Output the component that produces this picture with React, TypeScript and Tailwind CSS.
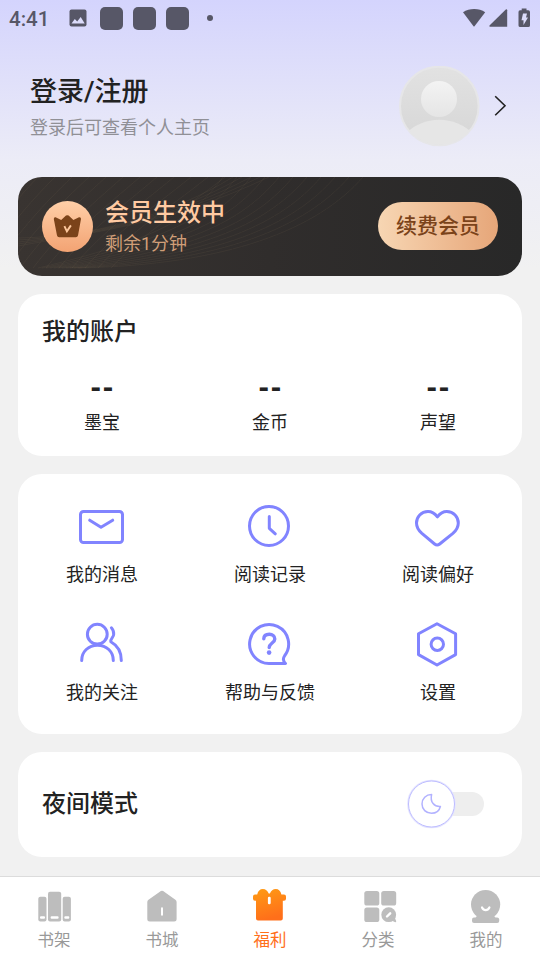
import React, { Fragment, ReactNode, useState } from "react";

interface MenuItem {
  label: string;
  icon: ReactNode;
}

const ACCOUNT_ITEMS = ["墨宝", "金币", "声望"];

const MENU_ITEMS: MenuItem[] = [
  {
    label: "我的消息",
    icon: (
      <Fragment>
        <rect x="2.5" y="9.5" width="42" height="31" rx="3" />
        <path d="M11.7 18.2 23 25.3 34.7 18.2" />
      </Fragment>
    ),
  },
  {
    label: "阅读记录",
    icon: (
      <Fragment>
        <circle cx="23" cy="24" r="19.5" />
        <path d="M23.3 14.5V26.3L29.3 31.8" />
      </Fragment>
    ),
  },
  {
    label: "阅读偏好",
    icon: (
      <path d="M23.4 14.8C20.5 11 17.5 9.5 14 9.5 7.2 9.5 2.5 14.8 2.5 21c0 4.5 2.2 7.6 5.4 10.4L20.6 42c1.7 1.4 3.4 1.4 5.1 0l13.2-10.6c3.2-2.8 5.4-5.9 5.4-10.4 0-6.2-4.7-11.5-11.5-11.5-3.5 0-6.5 1.5-9.4 5.3Z" />
    ),
  },
  {
    label: "我的关注",
    icon: (
      <Fragment>
        <circle cx="19.3" cy="14.2" r="9.9" />
        <path d="M3.7 40.4C3.7 31.5 10.5 25.2 19.5 25.2S35.3 31.5 35.3 40.4" />
        <path d="M33.4 7.8c1.7 1.8 2.4 4.2 2.3 6.5 0 3.2-3.6 4.2-2.9 7.5C39.5 25.5 43.3 32 43.3 40.4" />
      </Fragment>
    ),
  },
  {
    label: "帮助与反馈",
    icon: (
      <Fragment>
        <path d="M39.5 43.5H23A19.5 19.5 0 1 1 38.5 36c-1.5 2.2-2 4.5 1 7.5Z" />
        <path d="M17.8 18.8c.1-3.1 2.4-4.5 5.5-4.5s5.5 1.7 5.5 4.6c0 4-5.6 4.2-5.6 8.6" strokeWidth="3.4" />
        <circle cx="23.1" cy="32.6" r="2.3" fill="#8184ff" stroke="none" />
      </Fragment>
    ),
  },
  {
    label: "设置",
    icon: (
      <Fragment>
        <path d="M23 3.7 41.6 13.8V34.6L23 45 4.5 34.6V13.8Z" />
        <circle cx="23.3" cy="24.3" r="6.2" />
      </Fragment>
    ),
  },
];

const TABS: MenuItem[] = [
  {
    label: "书架",
    icon: (
      <Fragment>
        <rect x="2.3" y="8.7" width="8.2" height="24.8" rx="2" />
        <rect x="12" y="3.7" width="13.2" height="29.8" rx="2" />
        <rect x="26.7" y="8.7" width="8.2" height="24.8" rx="2" />
        <rect x="4" y="28.2" width="5" height="2.6" rx="1" fill="#fff" />
        <rect x="14.6" y="28.2" width="8" height="2.6" rx="1" fill="#fff" />
        <rect x="28.3" y="28.2" width="5" height="2.6" rx="1" fill="#fff" />
      </Fragment>
    ),
  },
  {
    label: "书城",
    icon: (
      <Fragment>
        <path d="M16.9 3.1q1.1-.9 2.2 0L31.4 11.8q1.2.9 1.2 2.2V31q0 2.5-2.5 2.5H5.8Q3.3 33.5 3.3 31V14q0-1.3 1.2-2.2Z" />
        <rect x="17" y="19.3" width="2" height="8.5" rx="1" fill="#fff" />
      </Fragment>
    ),
  },
  {
    label: "福利",
    icon: (
      <Fragment>
        <defs>
          <linearGradient id="gift" x1="0" y1="0" x2="0.3" y2="1">
            <stop offset="0" stopColor="#ff9c14" />
            <stop offset="1" stopColor="#ff6f1a" />
          </linearGradient>
        </defs>
        <path
          fill="url(#gift)"
          d="M3 6.6h2.2C6 3 8 1.1 10.8 1.1c3 0 4.5 1.7 5.9 4.5h1.2c1.4-2.8 2.9-4.5 5.9-4.5 2.8 0 4.8 1.9 5.6 5.5H32q2 0 2 2v2.1q0 2-2 2h-1.2V30.6q0 2-2 2H6q-2 0-2-2V12.7H3q-2 0-2-2V8.6q0-2 2-2Z"
        />
        <rect x="15.9" y="8.8" width="2.8" height="7.4" rx="1.2" fill="#fff" />
      </Fragment>
    ),
  },
  {
    label: "分类",
    icon: (
      <Fragment>
        <rect x="4.3" y="3" width="15" height="14.6" rx="2.6" />
        <rect x="21.2" y="3" width="15" height="14.6" rx="2.6" />
        <rect x="4.3" y="19.4" width="15" height="14.6" rx="2.6" />
        <circle cx="28.7" cy="26.7" r="7.4" />
        <path d="m31 32.3 3.4-3.3 1.8 4q.3 1.2-1 1.2Z" />
        <path d="m27 28.5 3.2-3.2" stroke="#fff" strokeWidth="2.4" strokeLinecap="round" />
      </Fragment>
    ),
  },
  {
    label: "我的",
    icon: (
      <Fragment>
        <circle cx="17.6" cy="16.6" r="14.6" />
        <rect x="4" y="29.4" width="27.2" height="5.6" rx="2" />
        <path d="M10 26h15l2.5 4h-20Z" />
        <path
          d="M14 19.5c1.8 3.6 5.6 3.6 7.4 0"
          fill="none"
          stroke="#fff"
          strokeWidth="2.2"
          strokeLinecap="round"
        />
      </Fragment>
    ),
  },
];

function StatusBar() {
  return (
    <div className="flex h-9 items-center pl-[9px] pr-2.5 text-[#575767]">
      <span className="w-[60px] pt-0.5 font-[Roboto] text-[20.5px] font-medium leading-none">
        4:41
      </span>
      <svg width="18" height="18" viewBox="0 0 18 18">
        <rect x="0.5" y="0.5" width="17" height="17" rx="2" fill="currentColor" />
        <path d="M2.5 14.5 5.8 10l2.4 2.6L11.7 8l4 6.5Z" fill="#dcdcfb" />
      </svg>
      <div className="ml-[13px] flex gap-2.5">
        {[...Array(3)].map((_, index) => (
          <span key={index} className="size-[23px] rounded-[5px] bg-[#575767]" />
        ))}
      </div>
      <span className="ml-[18px] size-1.5 rounded-full bg-[#575767]" />
      <svg className="ml-auto mt-px" width="67" height="22" viewBox="0 0 67 22" fill="currentColor">
        <path d="M0 4.3C6.5-.1 16-.1 22.2 4.3L11.5 18.3Q11 18.8 10.5 18.3Z" />
        <path d="M44.2 2.2V18.8H27q-1.2-.2-.5-1.2L42.8 1.6q1.2-.7 1.4.6Z" />
        <path d="M57 2.2h1.7V.5h4.8v1.7h1.7q1.8 0 1.8 1.8v13.4q0 1.6-1.8 1.6H57.3q-1.8 0-1.8-1.6V4q0-1.8 1.5-1.8Z" />
        <path d="M60 5.5h4l-1 4h2L60.5 17v-4.8h-2Z" fill="#dcdcfb" />
      </svg>
    </div>
  );
}

function Profile() {
  return (
    <div className="flex h-[141px] items-start pl-[30px] pr-[33px] pt-[30px]">
      <div className="flex flex-col pt-2">
        <h1 className="text-[27px] font-medium leading-9 text-[#222]">登录/注册</h1>
        <p className="text-lg leading-9 text-[#909096]">登录后可查看个人主页</p>
      </div>
      <svg className="ml-auto" width="81" height="81" viewBox="0 0 81 81">
        <defs>
          <linearGradient id="head" x1="0" y1="0" x2="0" y2="1">
            <stop offset="0" stopColor="#f3f3f3" />
            <stop offset="1" stopColor="#e5e5e5" />
          </linearGradient>
          <linearGradient id="face" x1="0" y1="0" x2="0" y2="1">
            <stop offset="0" stopColor="#e2e2e2" />
            <stop offset="1" stopColor="#d6d6d6" />
          </linearGradient>
          <clipPath id="avatar">
            <circle cx="40.3" cy="40" r="39" />
          </clipPath>
        </defs>
        <circle cx="40.3" cy="40" r="39.3" fill="url(#face)" stroke="#e6e6e8" strokeWidth="2" />
        <circle cx="40" cy="33" r="18" fill="url(#head)" />
        <circle cx="40.3" cy="102" r="48.3" fill="#e6e6e6" clipPath="url(#avatar)" />
      </svg>
      <svg
        className="ml-3.5 mt-[29px]"
        width="13"
        height="21"
        viewBox="0 0 13 21"
        fill="none"
        stroke="#222"
        strokeWidth="1.6"
      >
        <path d="M1.2 1.2 11 10.7 1.2 20.2" />
      </svg>
    </div>
  );
}

function VipCard() {
  return (
    <section className="relative flex h-[99px] items-center overflow-hidden rounded-[24px] bg-linear-to-r from-[#393431] via-[#302d2c] to-[#282828] px-6">
      <svg
        className="absolute inset-0"
        width="504"
        height="99"
        viewBox="0 0 504 99"
        fill="none"
        stroke="#b59a70"
        strokeOpacity="0.1"
        strokeWidth="0.8"
      >
        {[...Array(11)].map((_, index) => (
          <path
            key={index}
            d={`M${345 - index * 14} 0C${300 - index * 12} ${52 - index * 2} ${210 - index * 5} ${88 - index * 3} ${60 - index * 4} 91`}
          />
        ))}
        {[...Array(12)].map((_, index) => (
          <path
            key={index}
            d={`M${20 + index * 17} 0C${index * 15 - 5} ${26 + index} ${index * 14 - 25} 52 ${index * 13 - 50} 91`}
          />
        ))}
        {[...Array(5)].map((_, index) => (
          <path
            key={index}
            d={`M0 ${61 + index * 2}C70 ${60 - index} 150 ${40 + index * 2} ${215 + index * 9} 0`}
          />
        ))}
      </svg>
      <svg className="relative" width="51" height="51" viewBox="0 0 51 51">
        <defs>
          <linearGradient id="badge" x1="0" y1="0" x2="0" y2="1">
            <stop offset="0" stopColor="#ffcfa8" />
            <stop offset="1" stopColor="#f3a373" />
          </linearGradient>
        </defs>
        <circle cx="25.5" cy="25.5" r="25.5" fill="url(#badge)" />
        <path
          d="M13.6 16.3 19.2 19 24 14.6q1.3-.9 2.6 0l4.8 4.4 5.6-2.7q2.2-.3 2 1.6L36 34.5q-.4 1.8-2.2 1.8H17.2q-1.8 0-2.2-1.8L11.8 17.9q-.1-1.9 1.8-1.6Z"
          fill="#7b431a"
        />
        <path d="m22.4 25.2 2.5 5.2 4-6" fill="none" stroke="#fdc79c" strokeWidth="1.9" />
      </svg>
      <div className="relative ml-3">
        <h2 className="text-2xl font-medium leading-[34px] text-[#ffcaa2]">会员生效中</h2>
        <p className="text-lg leading-7 text-[#d09e78]">剩余1分钟</p>
      </div>
      <button className="relative mb-px ml-auto h-12 w-[120px] rounded-full bg-linear-to-r from-[#f7d6b3] to-[#e6a679] pt-0.5 text-[21px] font-medium text-[#7b431a]">
        续费会员
      </button>
    </section>
  );
}

function AccountCard() {
  return (
    <section className="h-[162px] rounded-[24px] bg-white pt-[21px]">
      <h2 className="pl-6 text-2xl font-medium leading-[34px] text-[#222]">我的账户</h2>
      <div className="grid grid-cols-3 pt-[22px]">
        {ACCOUNT_ITEMS.map((label) => (
          <div key={label} className="flex flex-col items-center">
            <span className="font-[Roboto] text-[27px] font-black leading-9 text-[#222]">--</span>
            <span className="text-lg leading-[31px] text-[#222]">{label}</span>
          </div>
        ))}
      </div>
    </section>
  );
}

function MenuCard() {
  return (
    <section className="grid h-[260px] grid-cols-3 content-start rounded-[24px] bg-white pt-7">
      {MENU_ITEMS.map((item) => (
        <div key={item.label} className="flex h-[118px] flex-col items-center">
          <svg
            width="48"
            height="48"
            viewBox="0 0 48 48"
            fill="none"
            stroke="#8184ff"
            strokeWidth="3"
            strokeLinecap="round"
            strokeLinejoin="round"
          >
            {item.icon}
          </svg>
          <span className="mt-[11px] text-lg leading-7 text-[#222]">{item.label}</span>
        </div>
      ))}
    </section>
  );
}

function NightModeCard() {
  const [night, setNight] = useState(false);

  return (
    <section className="flex h-[105px] items-center rounded-[24px] bg-white pb-0.5 pl-6 pr-[37px]">
      <h2 className="text-2xl font-medium text-[#222]">夜间模式</h2>
      <button
        role="switch"
        aria-checked={night}
        className="ml-auto flex"
        onClick={() => setNight(!night)}
      >
        <svg width="78" height="50" viewBox="0 0 78 50">
          <rect x="22" y="13" width="55" height="24" rx="12" fill={night ? "#c9c9ff" : "#eee"} />
          <g transform={night ? "translate(28 0)" : undefined}>
            <circle cx="24.5" cy="25" r="23.7" fill="#fff" stroke="#e4e4ff" strokeWidth="1.2" />
            <circle cx="24.5" cy="25" r="23" fill="#fff" stroke="#bdbcff" strokeWidth="1" />
            <path
              d="M24.6 15.6C19 15.6 15 19.7 15 25c0 5.2 4.1 9.3 9.4 9.3 4.5 0 8-2.7 9-6.8-6 .5-10.6-4.3-8.8-11.9Z"
              fill="none"
              stroke="#b2b2ff"
              strokeWidth="1.5"
              strokeLinejoin="round"
            />
          </g>
        </svg>
      </button>
    </section>
  );
}

function TabBar() {
  return (
    <nav className="grid h-[84px] grid-cols-5 border-t border-[#dcdcdc] bg-white pt-[11px]">
      {TABS.map((tab) => (
        <div
          key={tab.label}
          className={
            tab.label === "福利"
              ? "flex flex-col items-center text-[#ff6f1a]"
              : "flex flex-col items-center text-[#999]"
          }
        >
          <svg className="overflow-visible" width="36" height="36" viewBox="0 0 36 36" fill="#bdbdbd">
            {tab.icon}
          </svg>
          <span className="mt-[3px] text-[16.5px] leading-7">{tab.label}</span>
        </div>
      ))}
    </nav>
  );
}

function App() {
  return (
    <div className="flex h-[960px] w-[540px] flex-col overflow-hidden bg-[#f1f1f1] bg-[linear-gradient(180deg,#d4d4fd_0px,#ececf7_160px,#f1f1f1_270px)] font-[Roboto,'Noto_Sans_CJK_SC',sans-serif]">
      <StatusBar />
      <Profile />
      <main className="flex flex-1 flex-col gap-[18px] px-[18px]">
        <VipCard />
        <AccountCard />
        <MenuCard />
        <NightModeCard />
      </main>
      <TabBar />
    </div>
  );
}

export default App;
